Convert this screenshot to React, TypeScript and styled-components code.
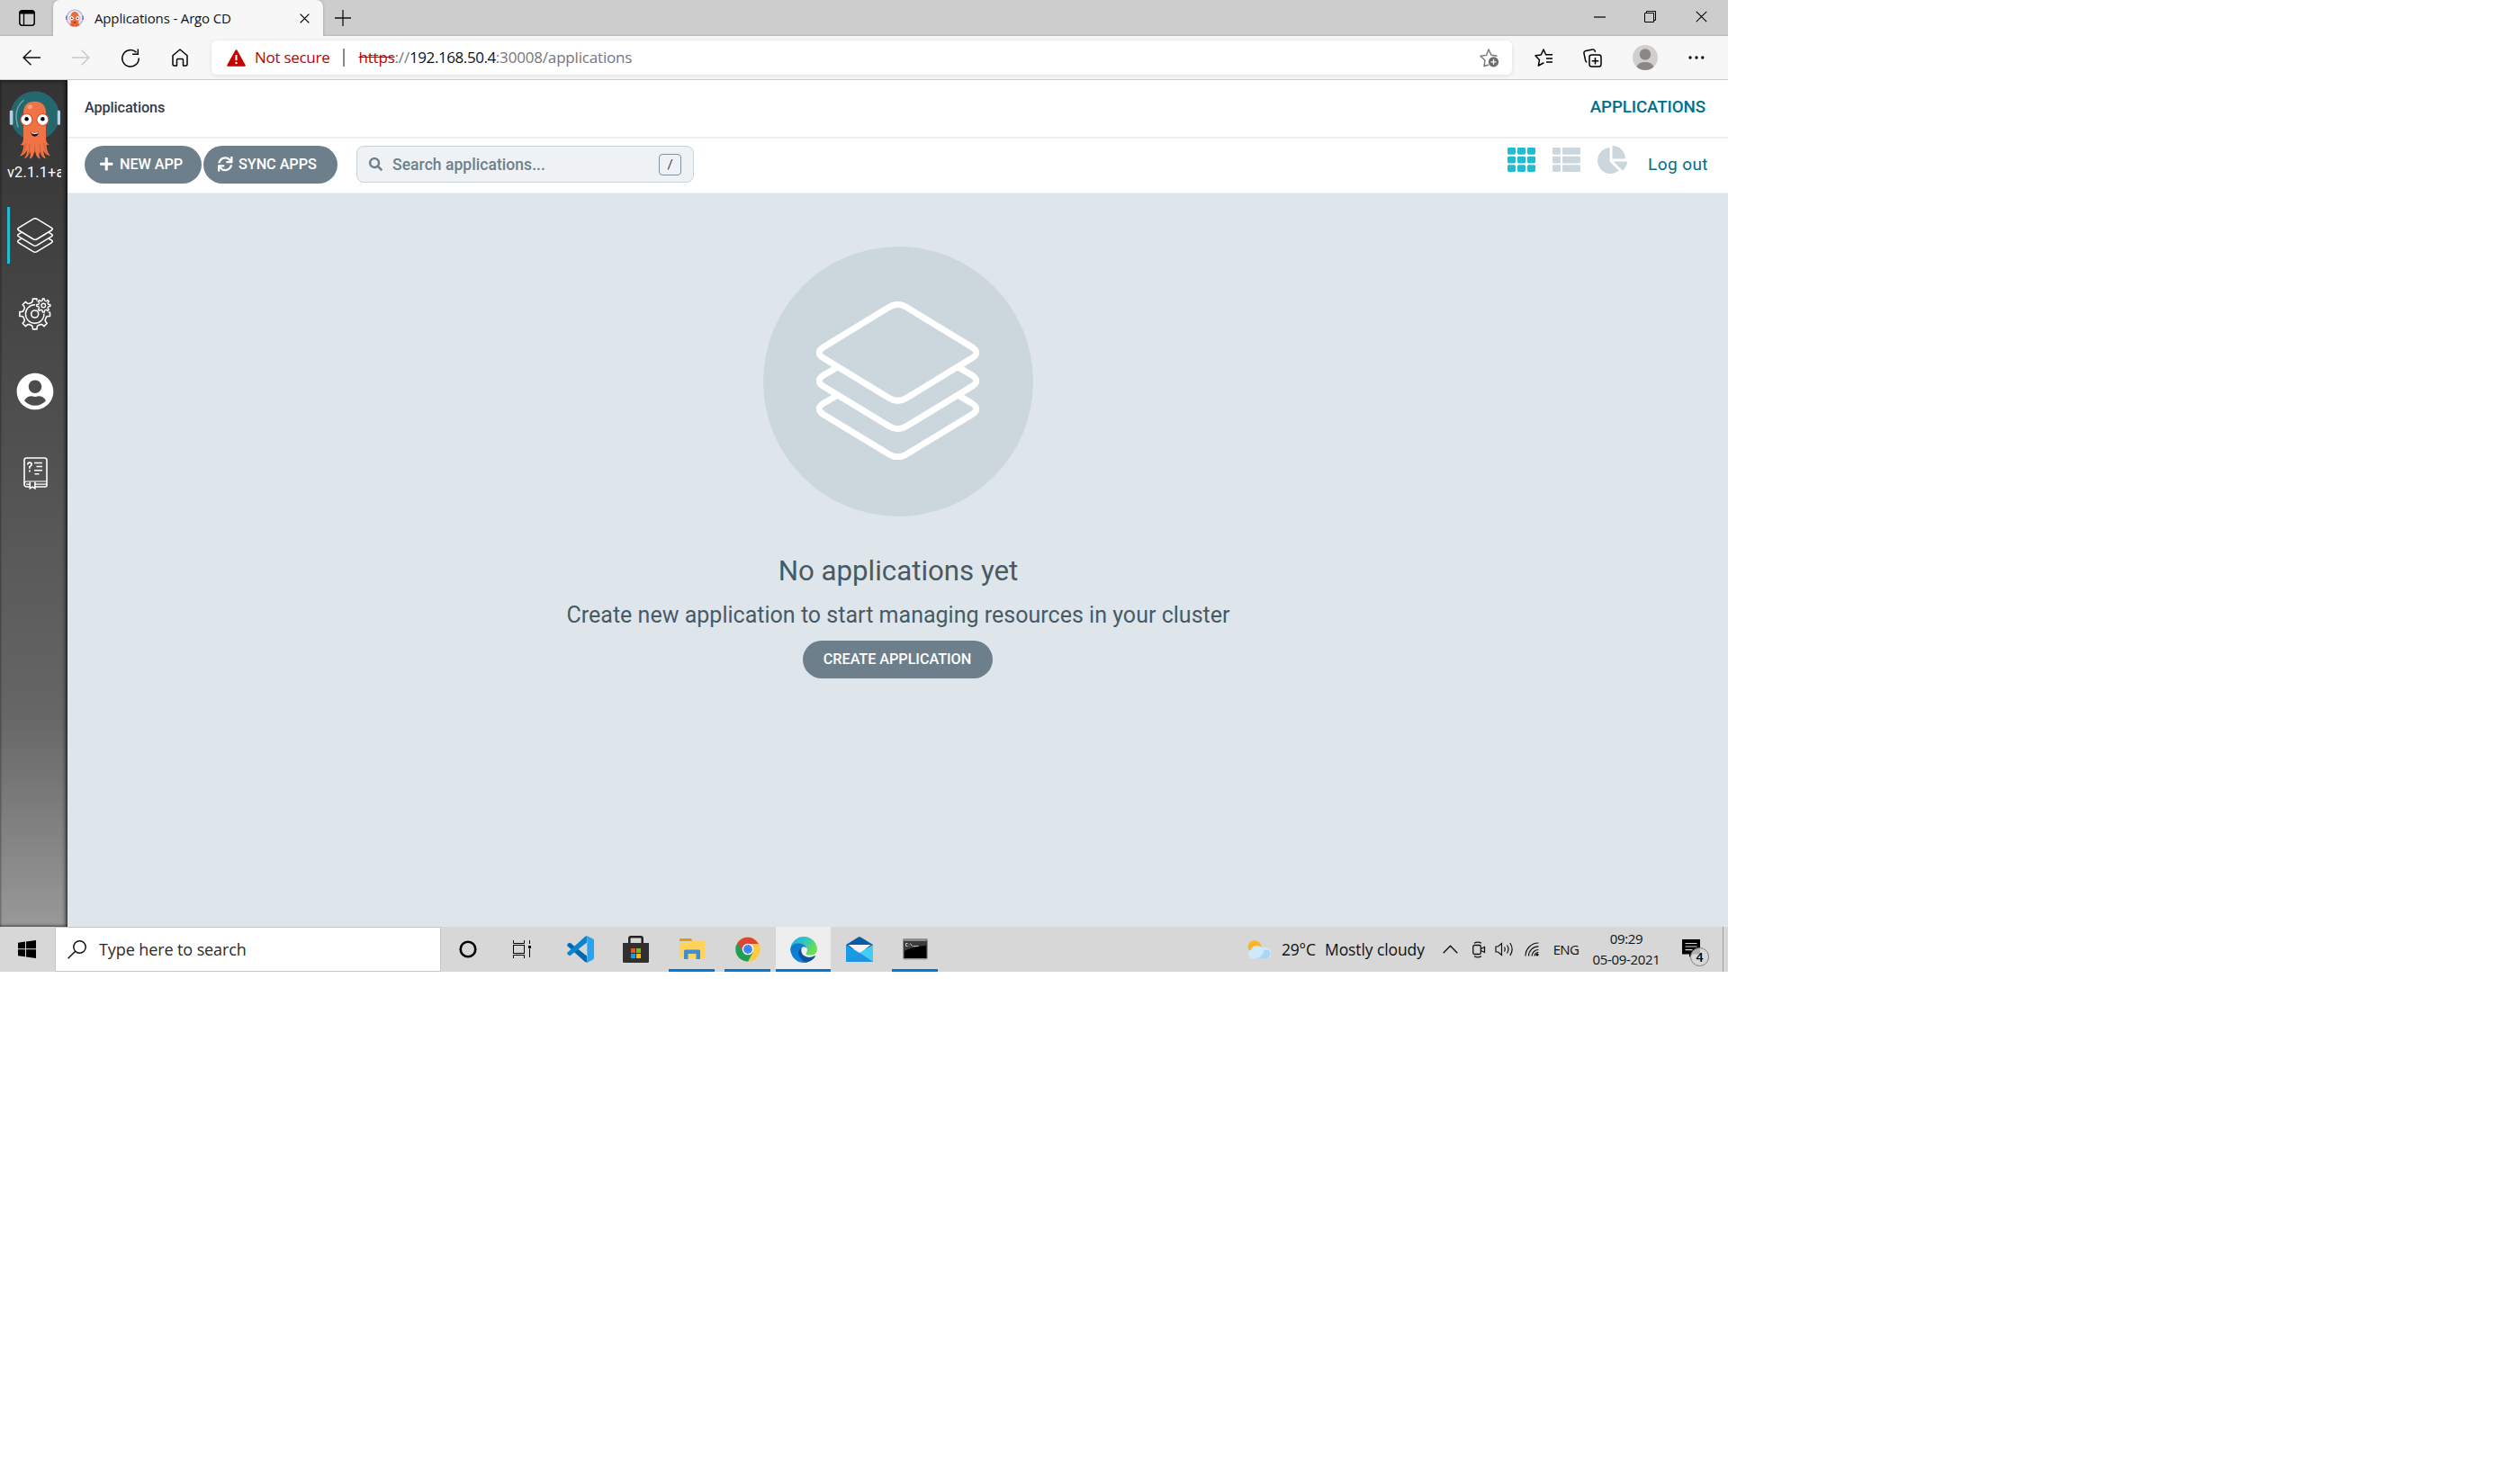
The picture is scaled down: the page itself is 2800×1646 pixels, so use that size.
import React from 'react';
import styled, { createGlobalStyle, css } from 'styled-components';
import { FaPlus, FaSync, FaSearch, FaTh, FaThList, FaChartPie, FaUserCircle } from 'react-icons/fa';

const UI = `'Open Sans', 'Noto Sans', sans-serif`;
const ROBOTO = `Roboto, 'Liberation Sans', sans-serif`;

const Global = createGlobalStyle`
  *, *::before, *::after { box-sizing: border-box; }
  body { margin: 0; background: #fff; }
  svg { display: block; flex: none; }
`;

const Screen = styled.div`
  width: 1920px;
  height: 1080px;
  display: flex;
  flex-direction: column;
  overflow: hidden;
  font-family: ${UI};
`;

const Slot = styled.div<{ $w: number; $end?: number; $top?: number }>`
  flex: none;
  width: ${(p) => p.$w}px;
  height: 100%;
  padding-right: ${(p) => p.$end ?? 0}px;
  padding-top: ${(p) => p.$top ?? 0}px;
  display: flex;
  align-items: center;
  justify-content: center;
`;

/* ---------- browser chrome ---------- */

const TitleBar = styled.header`
  flex: none;
  height: 40px;
  display: flex;
  background: linear-gradient(#cdcdcd 0 38px, #c0c0c0 39px, #b9b9b9 40px);
`;

const Tab = styled.div`
  width: 300px;
  height: 40px;
  padding: 0 15px 0 14px;
  display: flex;
  align-items: center;
  background: #f7f7f7;
  border-radius: 7px 7px 0 0;
  box-shadow: 0 0 3px rgba(0, 0, 0, 0.25);
`;

const TabTitle = styled.span`
  flex: 1;
  margin-left: 12px;
  padding-bottom: 1px;
  font-size: 15px;
  line-height: 38px;
  letter-spacing: -0.15px;
  color: #111;
  white-space: nowrap;
`;

const WindowControls = styled.div`
  margin-left: auto;
  display: flex;
  height: 37px;
  padding-right: 0.5px;
`;

const NavBar = styled.div`
  position: relative;
  flex: none;
  height: 49px;
  display: flex;
  align-items: center;
  padding-left: 7.5px;
  background: #f7f7f7;
  border-bottom: 1px solid #cbcbcb;
`;

const Address = styled.div`
  flex: none;
  width: 1445px;
  height: 38px;
  margin: 0 7.5px;
  padding: 0 14px 0 17px;
  display: flex;
  align-items: center;
  background: #fff;
  border-radius: 6px;
  box-shadow: 0 1px 5px rgba(0, 0, 0, 0.1);
  font-size: 17px;
  letter-spacing: -0.18px;
  white-space: nowrap;
  color: #767676;
`;

const NotSecure = styled.span`
  margin-left: 10px;
  padding-bottom: 2px;
  color: #c50000;
  letter-spacing: -0.28px;
`;

const Divider = styled.span`
  width: 2px;
  height: 20px;
  margin: 0 15px 0 15px;
  background: #8a8a8a;
`;

const Url = styled.span`
  flex: 1;
  padding-bottom: 2px;
  s { color: #c50000; }
  b { font-weight: 400; color: #111; letter-spacing: -0.42px; }
`;

/* ---------- argo page ---------- */

const Page = styled.div`
  flex: 1;
  min-height: 0;
  display: flex;
  font-family: ${ROBOTO};
`;

const Sidebar = styled.nav`
  flex: none;
  width: 75px;
  background: linear-gradient(#333 0, #666 75%, #999 100%);
  box-shadow: inset -2px 0 4px rgba(0, 0, 0, 0.65), inset 0 0 3px rgba(0, 0, 0, 0.5);
  display: flex;
  flex-direction: column;
`;

const Logo = styled.div`
  height: 92px;
  padding: 11px 0 0 10px;
`;

const Version = styled.div`
  margin: 0 7px 0 8px;
  height: 24px;
  overflow: hidden;
  white-space: nowrap;
  font-size: 16.25px;
  line-height: 21px;
  letter-spacing: 0.2px;
  color: #fff;
`;

const SideItem = styled.a<{ $active?: boolean; $top?: number; $bottom?: number }>`
  height: 63px;
  margin: 24.5px 0 0 8px;
  padding: ${(p) => p.$top ?? 0}px 8px ${(p) => p.$bottom ?? 0}px 0;
  display: flex;
  align-items: center;
  justify-content: center;
  color: #fff;
  border-left: 3px solid ${(p) => (p.$active ? '#1fbdd0' : 'transparent')};
`;

const Main = styled.main`
  flex: 1;
  display: flex;
  flex-direction: column;
  background: #dee6ec;
`;

const TopBar = styled.div`
  height: 65px;
  padding: 0 25px 2px 19px;
  display: flex;
  align-items: center;
  justify-content: space-between;
  background: #fff;
  border-bottom: 2px solid #e9eff2;
`;

const Crumb = styled.span`
  font-size: 16.25px;
  font-weight: 500;
  line-height: 24px;
  letter-spacing: -0.12px;
  color: #363c4a;
`;

const PageTitle = styled.span`
  padding-bottom: 2px;
  font-size: 18.75px;
  font-weight: 500;
  letter-spacing: -0.12px;
  color: #006f8a;
`;

const ToolBar = styled.div`
  height: 61px;
  padding: 8px 22px 0 19px;
  display: flex;
  align-items: flex-start;
  background: #fff;
  border-bottom: 1px solid #e9eff2;
`;

const Pill = styled.button<{ $w: number; $lead?: boolean }>`
  width: ${(p) => p.$w}px;
  height: 42px;
  margin: 0 2px 0 0;
  padding: 0 0 1px ${(p) => (p.$lead ? 16 : 0)}px;
  display: flex;
  align-items: center;
  justify-content: ${(p) => (p.$lead ? 'flex-start' : 'center')};
  gap: 6.5px;
  border: 0;
  border-radius: 21px;
  background: #6d7f8b;
  color: #fff;
  font: 500 16.25px ${ROBOTO};
  letter-spacing: -0.06px;
  white-space: nowrap;
`;

const SearchBox = styled.div`
  width: 375px;
  height: 41px;
  margin-left: 19px;
  padding: 0 13px;
  display: flex;
  align-items: center;
  border: 1px solid #c9d5dc;
  border-radius: 8px;
  background: #eef2f5;
  color: #6d7f8b;
  span { flex: 1; margin-left: 11px; font-size: 17.5px; font-weight: 500; letter-spacing: 0.05px; }
  kbd {
    width: 25px;
    height: 24px;
    display: grid;
    place-items: center;
    border: 1px solid #7c93a3;
    border-radius: 4px;
    font: 15px ${ROBOTO};
    color: #363c4a;
  }
`;

const ViewIcons = styled.div`
  margin-left: auto;
  height: 31px;
  display: flex;
  align-items: center;
  gap: 19px;
  color: #ccd6dd;
  svg:first-child { color: #1fbdd0; }
`;

const Logout = styled.a`
  margin-left: 23px;
  line-height: 41px;
  font-size: 19px;
  letter-spacing: 0.42px;
  color: #006f8a;
`;

const Empty = styled.section`
  display: flex;
  flex-direction: column;
  align-items: center;
  padding-top: 59px;
  padding-left: 1px;
  color: #495a63;
`;

const Disc = styled.div`
  width: 300px;
  height: 300px;
  padding: 0 1px 2px 0;
  display: flex;
  align-items: center;
  justify-content: center;
  border-radius: 50%;
  background: #ccd6dd;
  color: #fff;
`;

const Heading = styled.h4`
  margin: 38px 0 0;
  font-size: 31.25px;
  font-weight: 400;
  line-height: 46px;
  color: #495a63;
`;

const Sub = styled.h5`
  margin: 8px 0 10px;
  font-size: 25px;
  font-weight: 400;
  line-height: 36px;
  letter-spacing: 0.015px;
  color: #495a63;
`;

/* ---------- taskbar ---------- */

const TaskBar = styled.footer`
  flex: none;
  height: 50px;
  display: flex;
  background: #d7d7d7;
  color: #111;
`;

const TaskSearch = styled.div`
  flex: none;
  width: 429px;
  height: 50px;
  margin-left: 1px;
  display: flex;
  align-items: center;
  padding-left: 13px;
  background: #fff;
  border: 1px solid #c6c6c6;
  font-size: 18px;
  letter-spacing: -0.1px;
  color: #2b2b2b;
  span { margin-left: 14px; }
`;

const AppSlot = styled.div<{ $state?: 'open' | 'active' }>`
  flex: none;
  width: 61px;
  height: 50px;
  margin-right: 1px;
  display: flex;
  align-items: center;
  justify-content: center;
  ${(p) =>
    p.$state === 'active' &&
    css`
      background: #eee;
      box-shadow: inset 0 -3px #0078d7;
    `}
  ${(p) =>
    p.$state === 'open' &&
    css`
      background: linear-gradient(#0078d7, #0078d7) 50% 100% / 51px 3px no-repeat;
    `}
`;

const Tray = styled.div`
  margin-left: auto;
  display: flex;
  height: 50px;
`;

const TrayText = styled.span<{ $w: number; $size: number; $ls?: number; $center?: boolean }>`
  width: ${(p) => p.$w}px;
  font-size: ${(p) => p.$size}px;
  letter-spacing: ${(p) => p.$ls ?? 0}px;
  text-align: ${(p) => (p.$center ? 'center' : 'left')};
  line-height: 51px;
  white-space: nowrap;
`;

const Clock = styled.div`
  width: 94px;
  padding-top: 2px;
  font-size: 15px;
  line-height: 23px;
  letter-spacing: -0.35px;
  text-align: center;
`;

const ShowDesktop = styled.div`
  width: 6px;
  border-left: 1px solid #9e9e9e;
`;

/* ---------- drawings ---------- */

const line = { fill: 'none', stroke: 'currentColor' } as const;

const WorkspaceIcon = () => (
  <svg width="18" height="18" viewBox="0 0 18 18">
    <rect x="0.8" y="0.8" width="16.4" height="16.4" rx="3" fill="none" stroke="#000" strokeWidth="1.5" />
    <path d="M0.5 4.5V3a2.5 2.5 0 0 1 2.500-2.500h12A2.500 2.500 0 0 1 17.500 3v1.500z" />
    <path d="M5.500 4v13" stroke="#000" strokeWidth="1.300" />
  </svg>
);

const Favicon = () => (
  <svg width="20" height="20" viewBox="0 0 20 20">
    <circle cx="10" cy="10" r="9" fill="#e9e9f6" stroke="#b0a6dc" strokeWidth="1.1" />
    <path d="M.8 7.500v4.500M19.200 7.500v4.500" stroke="#7a68c4" strokeWidth="1.400" />
    <path d="M5.600 8a4.400 5 0 0 1 8.800 0v7l1 3.500q-5.400 1.800-10.800 0l1-3.500z" fill="#f0693d" />
    <circle cx="6.600" cy="10.300" r="2.500" fill="#fff" stroke="#dd5436" strokeWidth=".5" />
    <circle cx="13.400" cy="10.300" r="2.500" fill="#fff" stroke="#dd5436" strokeWidth=".5" />
    <circle cx="6.800" cy="10.300" r=".8" />
    <circle cx="13.200" cy="10.300" r=".8" />
    <path d="M8.200 14.500h3.600q-1.800 2.600-3.600 0z" fill="#5b1f14" />
    <path d="M8 17v2.500M12 17v2.500" stroke="#b54126" />
  </svg>
);

const CloseIcon = ({ size, w }: { size: number; w: number }) => (
  <svg width={size} height={size} viewBox="0 0 12 12">
    <path d="M.7.7l10.600 10.600M11.300.7L.7 11.300" {...line} strokeWidth={w} />
  </svg>
);

const Arrow = ({ color, flip }: { color: string; flip?: boolean }) => (
  <svg width="20" height="18" viewBox="0 0 20 18">
    <path
      d="M9.500.8L1 9l8.500 8.200M1 9h19"
      fill="none"
      stroke={color}
      strokeWidth="1.500"
      transform={flip ? 'matrix(-1 0 0 1 20 0)' : undefined}
    />
  </svg>
);

const ReloadIcon = () => (
  <svg width="20" height="21" viewBox="0 0 20 21">
    <path d="M16.500 4.300A9.200 9.200 0 1 0 19.200 10.500M18.300.5v5.700h-6.200" fill="none" stroke="#000" strokeWidth="1.500" />
  </svg>
);

const HomeIcon = () => (
  <svg width="18" height="20" viewBox="0 0 18 20">
    <path
      d="M9 1L1 7.800V17.500a1.500 1.500 0 0 0 1.500 1.500h3V12.500a1 1 0 0 1 1-1h5a1 1 0 0 1 1 1V19h3a1.500 1.500 0 0 0 1.500-1.500V7.800z"
      fill="none"
      stroke="#000"
      strokeWidth="1.500"
      strokeLinejoin="round"
    />
  </svg>
);

const WarningIcon = () => (
  <svg width="21" height="19" viewBox="0 0 21 19">
    <path d="M10.500 1.300L19.700 17.700H1.300z" fill="#c50000" stroke="#c50000" strokeWidth="2.200" strokeLinejoin="round" />
    <path d="M10.500 6v6.200" stroke="#fff" strokeWidth="2" />
    <circle cx="10.500" cy="15" r="1.200" fill="#fff" />
  </svg>
);

const StarAddIcon = () => (
  <svg width="22" height="22" viewBox="0 0 22 22">
    <path
      d="M10 19l-5 1.500 1-6.500-5-4.700 6.500-.9L10 2l3 6.300 6.500 1"
      fill="none"
      stroke="#767676"
      strokeWidth="1.400"
      strokeLinejoin="round"
    />
    <circle cx="15.500" cy="15.800" r="5.600" fill="#6b6b6b" />
    <path d="M15.500 12.800v6M12.500 15.800h6" stroke="#fff" strokeWidth="1.300" />
  </svg>
);

const FavoritesIcon = () => (
  <svg width="21" height="20" viewBox="0 0 21 20">
    <path
      d="M10 16l-5.700 3 1.200-6.300L1 7.800l6.300-.9L10 1l2.600 5.800"
      fill="none"
      stroke="#000"
      strokeWidth="1.500"
      strokeLinejoin="round"
      strokeLinecap="round"
    />
    <path d="M12.500 6.800H20M13 11h7M13 15h7" stroke="#000" strokeWidth="1.600" />
  </svg>
);

const CollectionsIcon = () => (
  <svg width="21" height="21" viewBox="0 0 21 21">
    <rect x="7" y="7" width="13" height="13" rx="2.500" fill="none" stroke="#000" strokeWidth="1.500" />
    <path d="M13.500 10v7.500M9.700 13.700h7.600" stroke="#000" strokeWidth="1.500" />
    <path
      d="M4.300 15.200A2.500 2.500 0 0 1 2.600 13L1 5.300a2.500 2.500 0 0 1 2-2.900L10.500 1a2.500 2.500 0 0 1 2.800 1.900l.2 1"
      fill="none"
      stroke="#000"
      strokeWidth="1.500"
    />
  </svg>
);

const AvatarIcon = () => (
  <svg width="28" height="28" viewBox="0 0 28 28">
    <circle cx="14" cy="14" r="14" fill="#d2d0ce" />
    <circle cx="14" cy="10.500" r="6.200" fill="#8a8886" />
    <path d="M4.500 24.200a9.800 7 0 0 1 19 0A14 14 0 0 1 4.500 24.200z" fill="#8a8886" />
  </svg>
);

const DotsIcon = () => (
  <svg width="18" height="4" viewBox="0 0 18 4">
    <circle cx="2" cy="2" r="1.700" />
    <circle cx="9" cy="2" r="1.700" />
    <circle cx="15.800" cy="2" r="1.700" />
  </svg>
);

const ArgoLogo = () => (
  <svg width="58" height="79" viewBox="0 0 58 79">
    <circle cx="28.700" cy="28.700" r="26.600" fill="#23686c" stroke="#33617c" strokeWidth="1.200" />
    <path d="M16 11.500Q4 22 10 41" fill="none" stroke="#6ea3a4" strokeWidth="1.500" strokeLinecap="round" />
    <rect x="0.800" y="22.800" width="3.600" height="16" rx="1" fill="#b8d0e6" />
    <rect x="53.800" y="22.800" width="3.200" height="16" rx="1" fill="#b8d0e6" />
    <path
      d="M16 27Q15.500 12.800 28.500 12.800T41 27V53Q41 59.500 45 60.500L41.500 61Q42 69.500 46 73Q40 72.500 38 67Q38.500 73 41 76.500Q36 75 34 68.500L33.500 71Q33.300 74.500 35 76.500Q31.500 76 30.300 72.500L28.600 67L27 72.500Q26 76 22.500 76.500Q24 74.500 23.800 71L23.500 68.500Q21.500 75 16.500 76.500Q20 72.500 20 67Q17.500 72.500 12 73.500Q16 68.500 16.300 61.500L12.300 61Q16 59.500 16 53z"
      fill="#f07346"
    />
    <path d="M18.500 59q0 7-3.500 12.500M23 60q0 9-2.500 14M28.500 61v8M34 60q0 9 3 14M38.500 59q.5 8 4 12.500" fill="none" stroke="#c5532f" strokeWidth=".7" />
    <ellipse cx="23.300" cy="19" rx="2.800" ry="2.300" fill="#f8a283" transform="rotate(-25 23 19)" />
    <circle cx="19.400" cy="33" r="6.500" fill="#fff" stroke="#e5492f" strokeWidth="1.100" />
    <circle cx="37.400" cy="33" r="6.500" fill="#fff" stroke="#e5492f" strokeWidth="1.100" />
    <circle cx="19.600" cy="32.200" r="2.200" />
    <circle cx="37.400" cy="32.200" r="2.200" />
    <path d="M24.200 46.500q4.400 2.200 8.800 0-.7 5.200-4.400 5.200t-4.400-5.200z" fill="#2a1210" />
    <path d="M24.800 46.800q3.800 2 7.700 0l-.4 1.500q-3.500 1.500-6.900 0z" fill="#fff" />
  </svg>
);

const sheet = 'M8.500 63.300L81 107.500Q90.500 113.300 100 107.500L172.500 63.300Q183 56.900 172.500 50.500';

const Layers = ({ width, height, stroke }: { width: number; height: number; stroke: number }) => (
  <svg width={width} height={height} viewBox="0 0 181 176.500">
    <g {...line} strokeWidth={stroke}>
      <path d={`${sheet}L100 6.300Q90.500 .5 81 6.300L8.500 50.500Q-2 56.900 8.500 63.300Z`} />
      <path d="M23.500 73L8.500 81.700Q-2 88.300 8.500 94.700L81 138.800Q90.500 144.600 100 138.800L172.500 94.700Q183 88.300 172.500 81.700L157.500 73" />
      <path d="M23.500 104.200L8.500 112.900Q-2 119.500 8.500 125.900L81 170Q90.500 175.800 100 170L172.500 125.900Q183 119.500 172.500 112.900L157.500 104.200" />
    </g>
  </svg>
);

const gearPath = (cx: number, cy: number, teeth: number, outer: number, inner: number, turn = 0) => {
  const step = (Math.PI * 2) / teeth;
  const profile: Array<[number, number]> = [
    [-0.34, inner],
    [-0.22, inner + (outer - inner) * 0.3],
    [-0.18, outer],
    [0.18, outer],
    [0.22, inner + (outer - inner) * 0.3],
    [0.34, inner],
  ];
  const points: string[] = [];
  for (let i = 0; i < teeth; i += 1) {
    profile.forEach(([k, r]) => {
      const a = (i + k) * step + turn;
      points.push(`${(cx + r * Math.sin(a)).toFixed(2)} ${(cy - r * Math.cos(a)).toFixed(2)}`);
    });
  }
  return `M${points.join('L')}Z`;
};

const GearsIcon = () => (
  <svg width="38" height="38" viewBox="0 0 38 38">
    <mask id="gear-gap">
      <rect width="38" height="38" fill="#fff" />
      <circle cx="28.300" cy="9.500" r="9.300" fill="#000" />
      <path d="M20.500 0h20v17.500h-4z" fill="#000" />
    </mask>
    <g {...line} strokeWidth="1.600" strokeLinejoin="round">
      <g mask="url(#gear-gap)">
        <path d={gearPath(18.700, 19, 8, 17, 13.200)} />
        <circle cx="18.700" cy="19" r="10.300" strokeWidth="1.400" />
      </g>
      <circle cx="18.700" cy="19" r="4" />
      <path d={gearPath(28.300, 9.500, 8, 7.600, 5.500)} strokeWidth="1.400" />
      <circle cx="28.300" cy="9.500" r="2.300" strokeWidth="1.400" />
    </g>
  </svg>
);

const DocsIcon = () => (
  <svg width="27" height="36" viewBox="0 0 27 36">
    <g {...line} strokeWidth="1.600">
      <path d="M3.500 33H7M13 33h11.500a1.500 1.500 0 0 0 1.500-1.500V3.300A2.300 2.300 0 0 0 23.700 1H3.300A2.300 2.300 0 0 0 1 3.300V30.500A2.500 2.500 0 0 0 3.500 33" />
      <path d="M1 29.500Q1.500 27 4 27H26M13 30.200h13M3 30.200h4" strokeWidth="1.200" />
      <path d="M7.300 27.500v7.300l2.800-1.700 2.800 1.700v-7.300" />
      <path d="M12 6.500h9M14.500 10.500h6.500M12 14.700h9M12.500 18.700h5" strokeWidth="1.500" />
      <path d="M4.700 8.500q0-2.300 2.200-2.300t2.200 2q0 1.400-2.200 2.500v2M6.900 14.500v2" strokeWidth="1.700" />
    </g>
  </svg>
);

const WindowsIcon = () => (
  <svg width="20" height="20" viewBox="0 0 20 20">
    <path d="M0 2.800L8 1.600V9.300H0zM9 1.500L20 0V9.300H9zM0 10.300H8V18.300L0 17.200zM9 10.300H20V20L9 18.500z" />
  </svg>
);

const LensIcon = () => (
  <svg width="21" height="21" viewBox="0 0 21 21">
    <circle cx="13.500" cy="7.500" r="6.700" fill="none" stroke="#111" strokeWidth="1.500" />
    <path d="M8.700 12.300L.6 20.300" stroke="#111" strokeWidth="1.500" />
  </svg>
);

const TaskViewIcon = () => (
  <svg width="20" height="20" viewBox="0 0 20 20">
    <g fill="none" stroke="#000">
      <path d="M.5 0v3.500h12V0M.5 20v-3.500h12V20" />
      <rect x=".5" y="5.500" width="12" height="9" />
      <path d="M18.500 0v4M18.500 9.500V19" />
    </g>
    <rect x="17" y="6" width="3" height="3" />
  </svg>
);

const VsCodeIcon = () => (
  <svg width="30" height="30" viewBox="0 0 30 30">
    <path d="M22 22.500L4 8.200Q3 7.500 2 8.200L.6 9.500Q-.4 10.500.6 11.500L20 29l2.500.8z" fill="#0068b0" />
    <path d="M22 7.500L4 21.800Q3 22.500 2 21.800L.6 20.500Q-.4 19.500.6 18.500L20 1l2.500-.8z" fill="#0a84cf" />
    <path d="M22.300.3L28.600 3.200Q30 3.800 30 5.500V24.500Q30 26 28.600 26.700L22.300 29.700Q21 30 20 29 22.400 30.500 22.400 27.800V2.200Q22.400-.5 20 1 21 0 22.300.3z" fill="#26a3f2" />
  </svg>
);

const StoreIcon = () => (
  <svg width="29" height="30" viewBox="0 0 29 30">
    <path d="M7.300 9V3q0-1.700 1.700-1.700h11Q21.700 1.300 21.700 3V9" fill="none" stroke="#222" strokeWidth="2.500" />
    <path d="M0 8H29V28.500Q29 30 27.500 30H1.500Q0 30 0 28.500z" fill="#303030" />
    <path d="M9 14h5v5H9z" fill="#f25022" />
    <path d="M15 14h5v5h-5z" fill="#7fba00" />
    <path d="M9 20h5v5H9z" fill="#00a4ef" />
    <path d="M15 20h5v5h-5z" fill="#ffb900" />
  </svg>
);

const FolderIcon = () => (
  <svg width="28" height="24" viewBox="0 0 28 24">
    <path d="M0 1Q0 0 1 0H12Q13 0 13.500 1L14.500 3H0z" fill="#e09c00" />
    <path d="M0 4H11L14 2.300H27Q28 2.300 28 3.300V22H0z" fill="#ffd35c" />
    <path d="M5 23V14Q5 12.500 6.500 12.500H21.500Q23 12.500 23 14V23H18.500V17H9.500V23z" fill="#3a8fd6" />
  </svg>
);

const ChromeIcon = () => (
  <svg width="28" height="28" viewBox="0 0 28 28">
    <circle cx="14" cy="14" r="13.700" fill="#fbcb42" />
    <path d="M14 14L2.100 7.200A13.700 13.700 0 0 0 14 27.700L19.700 17.500z" fill="#1d9f57" />
    <path d="M14 8H25.800A13.700 13.700 0 0 0 2.300 6.900L8.600 17z" fill="#dc4437" />
    <circle cx="14" cy="14" r="6.300" fill="#fff" />
    <circle cx="14" cy="14" r="4.900" fill="#4286f5" />
  </svg>
);

const EdgeIcon = () => (
  <svg width="30" height="30" viewBox="0 0 30 30">
    <defs>
      <linearGradient id="edge-top" x1="0" x2="1" y2=".5">
        <stop offset="0" stopColor="#27a9ea" />
        <stop offset=".5" stopColor="#2cc5cb" />
        <stop offset="1" stopColor="#6fe04b" />
      </linearGradient>
      <linearGradient id="edge-side" x1=".4" x2=".6" y2="1">
        <stop offset="0" stopColor="#1178c9" />
        <stop offset="1" stopColor="#0c86dd" />
      </linearGradient>
    </defs>
    <path d="M.3 13.500A15 15 0 0 1 30 14.500Q30 21 23 21.500 17.500 21.500 17.500 19.500 19 18 19 15.500 18.500 9 10 8.500 3.500 9 .3 13.500z" fill="url(#edge-top)" />
    <path d="M0 15Q1.500 8 10 8.300 17.500 9 18.800 14.500 17 11.700 14 12.500 9 16 11.500 22 14 27.500 19 29.400 14 31 8.500 28.500 1 24.500 0 15z" fill="url(#edge-side)" />
    <path d="M12.500 13.500Q8.500 16 9.300 21 11.500 28.500 18.500 29.500 25 28 28 22.800 28.200 22 27.300 22.200 20 26 14.500 21.500 11.500 18.500 12.500 13.500z" fill="#0f4f9c" />
  </svg>
);

const MailIcon = () => (
  <svg width="30" height="28" viewBox="0 0 30 28">
    <path d="M0 9L13.800.6Q15 0 16.200.6L30 9V14H0z" fill="#0a5ca8" />
    <path d="M2.500 9H27.500L15 19z" fill="#f4f4f4" />
    <path d="M0 9L15 18 30 27.500V28H0z" fill="#1a9be6" />
    <path d="M30 9L15 18 30 28z" fill="#42cdf5" />
    <path d="M0 28L15 18 30 28z" fill="#1f93df" />
  </svg>
);

const TerminalIcon = () => (
  <svg width="28" height="24" viewBox="0 0 28 24">
    <rect x=".7" y=".7" width="26.600" height="22" rx="1.200" fill="#000" stroke="#8e959b" strokeWidth="1.400" />
    <path d="M1.500 1.500h25v1.200h-25z" fill="#c3cad0" />
    <path d="M1.500 3h25v5Q12 8.500 1.500 14z" fill="#3c3c3c" />
    <path d="M5.500 5.500H3.500v3h2M7 6v.6M7 8v.6M8.500 5.500l2 3M11.500 8.600h6" fill="none" stroke="#ddd" strokeWidth=".9" />
  </svg>
);

const WeatherIcon = () => (
  <svg width="26" height="21" viewBox="0 0 26 21">
    <circle cx="8" cy="7.500" r="7.300" fill="#fbb425" />
    <path d="M5.500 20.500A5.300 5.300 0 0 1 4.300 10.200 5.500 5.500 0 0 1 11 6.200 6 6 0 0 1 16 8 6.500 6.500 0 0 1 21.500 8.500 6 6 0 0 1 20.500 20.500z" fill="#cfe9fa" />
    <path d="M8 20.500Q16.500 19.500 18.500 11 25 9.500 25.500 14.500 25 20 20.500 20.500z" fill="#a9d6f5" />
  </svg>
);

const ChevronIcon = () => (
  <svg width="17" height="10" viewBox="0 0 17 10">
    <path d="M.7 9.200L8.500 1.200l7.800 8" fill="none" stroke="#111" strokeWidth="1.400" />
  </svg>
);

const CameraIcon = () => (
  <svg width="15" height="19" viewBox="0 0 15 19">
    <g fill="none" stroke="#111" strokeWidth="1.300">
      <rect x=".8" y="4.500" width="8.500" height="10" rx="1.500" />
      <path d="M9.500 8.500l4-2v6l-4-2M2 2.200Q6 0 10 2.200M2 16.800Q6 19 10 16.800" />
    </g>
  </svg>
);

const SpeakerIcon = () => (
  <svg width="22" height="18" viewBox="0 0 22 18">
    <path
      d="M1 6v6h2.500l4 3.500v-13L3.500 6zM10.500 6.500Q12 9 10.500 11.500M13.500 4.500Q16.500 9 13.500 13.500M16.800 2Q21.500 9 16.800 16"
      fill="none"
      stroke="#111"
      strokeWidth="1.200"
    />
  </svg>
);

const WifiIcon = () => (
  <svg width="16" height="16" viewBox="0 0 16 16">
    <g fill="none" stroke="#111" strokeWidth="1.200">
      <path d="M1 15.500A14.500 14.500 0 0 1 15.500 1M4.500 15.500A11 11 0 0 1 15.500 4.800M8 15.500A7.500 7.500 0 0 1 15.500 8.500M11 15.500a4.500 4.500 0 0 1 4.500-4" />
    </g>
    <circle cx="14" cy="14" r="1.600" />
  </svg>
);

const NoticeIcon = () => (
  <svg width="32" height="32" viewBox="0 0 32 32">
    <path d="M1 1H21V17.500H12L9 21V17.500H1z" />
    <path d="M4.500 5.500h13M4.500 9h13M4.500 12.700h8" stroke="#d7d7d7" strokeWidth="1.200" />
    <circle cx="20.500" cy="20.500" r="10" fill="#d7d7d7" fillOpacity=".82" stroke="#808080" />
    <text x="20.500" y="25.500" textAnchor="middle" fontFamily="Open Sans, sans-serif" fontWeight="600" fontSize="14">
      4
    </text>
  </svg>
);

/* ---------- page assembly ---------- */

export default function App() {
  return (
    <Screen>
      <Global />
      <TitleBar>
        <Slot $w={59}>
          <WorkspaceIcon />
        </Slot>
        <Tab>
          <Favicon />
          <TabTitle>Applications - Argo CD</TabTitle>
          <CloseIcon size={11} w={1.4} />
        </Tab>
        <Slot $w={43}>
          <svg width="18" height="18" viewBox="0 0 18 18">
            <path d="M9 0v18M0 9h18" stroke="#111" strokeWidth="1.300" />
          </svg>
        </Slot>
        <WindowControls>
          <Slot $w={57}>
            <svg width="13" height="2">
              <path d="M0 1h13" stroke="#000" strokeWidth="1.200" />
            </svg>
          </Slot>
          <Slot $w={57} $end={1}>
            <svg width="13" height="13" viewBox="0 0 13 13">
              <path d="M.5 2.500h10v10H.5zM2.500 2.500v-2h10v10h-2" fill="none" stroke="#000" />
            </svg>
          </Slot>
          <Slot $w={57} $end={1}>
            <CloseIcon size={13} w={1} />
          </Slot>
        </WindowControls>
      </TitleBar>

      <NavBar>
        <Slot $w={55}>
          <Arrow color="#111" />
        </Slot>
        <Slot $w={55}>
          <Arrow color="#c9c9c9" flip />
        </Slot>
        <Slot $w={55}>
          <ReloadIcon />
        </Slot>
        <Slot $w={55}>
          <HomeIcon />
        </Slot>
        <Address>
          <WarningIcon />
          <NotSecure>Not secure</NotSecure>
          <Divider />
          <Url>
            <s>https</s>://<b>192.168.50.4</b>:30008/applications
          </Url>
          <StarAddIcon />
        </Address>
        <Slot $w={55}>
          <FavoritesIcon />
        </Slot>
        <Slot $w={55} $end={1}>
          <CollectionsIcon />
        </Slot>
        <Slot $w={61}>
          <AvatarIcon />
        </Slot>
        <Slot $w={54} $end={2}>
          <DotsIcon />
        </Slot>
      </NavBar>

      <Page>
        <Sidebar>
          <Logo>
            <ArgoLogo />
          </Logo>
          <Version>v2.1.1+a</Version>
          <SideItem $active>
            <Layers width={40} height={39} stroke={7} />
          </SideItem>
          <SideItem>
            <GearsIcon />
          </SideItem>
          <SideItem $bottom={3}>
            <FaUserCircle size={42} />
          </SideItem>
          <SideItem $top={4}>
            <DocsIcon />
          </SideItem>
        </Sidebar>
        <Main>
          <TopBar>
            <Crumb>Applications</Crumb>
            <PageTitle>APPLICATIONS</PageTitle>
          </TopBar>
          <ToolBar>
            <Pill $w={130} $lead>
              <FaPlus size={16.5} />
              NEW APP
            </Pill>
            <Pill $w={149} $lead>
              <FaSync size={16.5} />
              SYNC APPS
            </Pill>
            <SearchBox>
              <FaSearch size={15} />
              <span>Search applications...</span>
              <kbd>/</kbd>
            </SearchBox>
            <ViewIcons>
              <FaTh size={31} />
              <FaThList size={31} />
              <FaChartPie size={33} />
            </ViewIcons>
            <Logout>Log out</Logout>
          </ToolBar>
          <Empty>
            <Disc>
              <Layers width={181} height={176.5} stroke={7} />
            </Disc>
            <Heading>No applications yet</Heading>
            <Sub>Create new application to start managing resources in your cluster</Sub>
            <Pill $w={211}>CREATE APPLICATION</Pill>
          </Empty>
        </Main>
      </Page>

      <TaskBar>
        <Slot $w={60}>
          <WindowsIcon />
        </Slot>
        <TaskSearch>
          <LensIcon />
          <span>Type here to search</span>
        </TaskSearch>
        <Slot $w={60}>
          <svg width="20" height="20" viewBox="0 0 20 20">
            <circle cx="10" cy="10" r="8.300" fill="none" stroke="#000" strokeWidth="2.600" />
          </svg>
        </Slot>
        <Slot $w={64} $end={4}>
          <TaskViewIcon />
        </Slot>
        <AppSlot>
          <VsCodeIcon />
        </AppSlot>
        <AppSlot>
          <StoreIcon />
        </AppSlot>
        <AppSlot $state="open">
          <FolderIcon />
        </AppSlot>
        <AppSlot $state="open">
          <ChromeIcon />
        </AppSlot>
        <AppSlot $state="active">
          <EdgeIcon />
        </AppSlot>
        <AppSlot>
          <MailIcon />
        </AppSlot>
        <AppSlot $state="open">
          <TerminalIcon />
        </AppSlot>
        <Tray>
          <Slot $w={38} $end={12}>
            <WeatherIcon />
          </Slot>
          <TrayText $w={48} $size={17.5} $ls={-0.2}>
            29°C
          </TrayText>
          <TrayText $w={125} $size={17.5} $ls={-0.1}>
            Mostly cloudy
          </TrayText>
          <Slot $w={30} $end={1}>
            <ChevronIcon />
          </Slot>
          <Slot $w={32}>
            <CameraIcon />
          </Slot>
          <Slot $w={26}>
            <SpeakerIcon />
          </Slot>
          <Slot $w={35} $end={1}>
            <WifiIcon />
          </Slot>
          <TrayText $w={40} $size={15} $ls={-0.6} $center>
            ENG
          </TrayText>
          <Clock>
            <div>09:29</div>
            <div>05-09-2021</div>
          </Clock>
          <Slot $w={60} $top={8}>
            <NoticeIcon />
          </Slot>
          <ShowDesktop />
        </Tray>
      </TaskBar>
    </Screen>
  );
}
